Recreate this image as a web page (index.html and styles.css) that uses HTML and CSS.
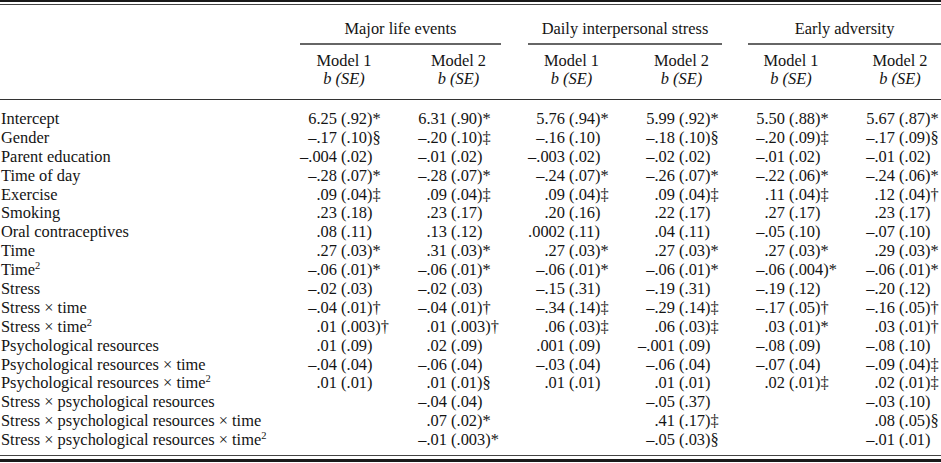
FILE: index.html
```html
<!DOCTYPE html>
<html>
<head>
<meta charset="utf-8">
<link rel="stylesheet" href="styles.css">
</head>
<body>
<div class="tbl">
  <div class="rule-top"></div>
  <div class="head">
    <div class="lab"></div>
    <div class="grp g1"><span class="gt">Major life events</span></div>
    <div class="grp g2"><span class="gt">Daily interpersonal stress</span></div>
    <div class="grp g3"><span class="gt">Early adversity</span></div>
    <div class="lab"></div>
    <div class="mh"><div class="ml">Model 1</div><div class="ml"><i>b (SE)</i></div></div>
    <div class="mh"><div class="ml">Model 2</div><div class="ml"><i>b (SE)</i></div></div>
    <div class="mh"><div class="ml">Model 1</div><div class="ml"><i>b (SE)</i></div></div>
    <div class="mh"><div class="ml">Model 2</div><div class="ml"><i>b (SE)</i></div></div>
    <div class="mh"><div class="ml">Model 1</div><div class="ml"><i>b (SE)</i></div></div>
    <div class="mh last"><div class="ml">Model 2</div><div class="ml"><i>b (SE)</i></div></div>
  </div>
  <div class="rule-mid"></div>
  <div class="body">
    <div class="lab">Intercept</div>
    <div class="c c1"><span class="b">6.25</span> (.92)*</div>
    <div class="c c2"><span class="b">6.31</span> (.90)*</div>
    <div class="c c3"><span class="b">5.76</span> (.94)*</div>
    <div class="c c4"><span class="b">5.99</span> (.92)*</div>
    <div class="c c5"><span class="b">5.50</span> (.88)*</div>
    <div class="c c6"><span class="b">5.67</span> (.87)*</div>

    <div class="lab">Gender</div>
    <div class="c c1"><span class="b">–.17</span> (.10)§</div>
    <div class="c c2"><span class="b">–.20</span> (.10)‡</div>
    <div class="c c3"><span class="b">–.16</span> (.10)</div>
    <div class="c c4"><span class="b">–.18</span> (.10)§</div>
    <div class="c c5"><span class="b">–.20</span> (.09)‡</div>
    <div class="c c6"><span class="b">–.17</span> (.09)§</div>

    <div class="lab">Parent education</div>
    <div class="c c1"><span class="b">–.004</span> (.02)</div>
    <div class="c c2"><span class="b">–.01</span> (.02)</div>
    <div class="c c3"><span class="b">–.003</span> (.02)</div>
    <div class="c c4"><span class="b">–.02</span> (.02)</div>
    <div class="c c5"><span class="b">–.01</span> (.02)</div>
    <div class="c c6"><span class="b">–.01</span> (.02)</div>

    <div class="lab">Time of day</div>
    <div class="c c1"><span class="b">–.28</span> (.07)*</div>
    <div class="c c2"><span class="b">–.28</span> (.07)*</div>
    <div class="c c3"><span class="b">–.24</span> (.07)*</div>
    <div class="c c4"><span class="b">–.26</span> (.07)*</div>
    <div class="c c5"><span class="b">–.22</span> (.06)*</div>
    <div class="c c6"><span class="b">–.24</span> (.06)*</div>

    <div class="lab">Exercise</div>
    <div class="c c1"><span class="b">.09</span> (.04)‡</div>
    <div class="c c2"><span class="b">.09</span> (.04)‡</div>
    <div class="c c3"><span class="b">.09</span> (.04)‡</div>
    <div class="c c4"><span class="b">.09</span> (.04)‡</div>
    <div class="c c5"><span class="b">.11</span> (.04)‡</div>
    <div class="c c6"><span class="b">.12</span> (.04)†</div>

    <div class="lab">Smoking</div>
    <div class="c c1"><span class="b">.23</span> (.18)</div>
    <div class="c c2"><span class="b">.23</span> (.17)</div>
    <div class="c c3"><span class="b">.20</span> (.16)</div>
    <div class="c c4"><span class="b">.22</span> (.17)</div>
    <div class="c c5"><span class="b">.27</span> (.17)</div>
    <div class="c c6"><span class="b">.23</span> (.17)</div>

    <div class="lab">Oral contraceptives</div>
    <div class="c c1"><span class="b">.08</span> (.11)</div>
    <div class="c c2"><span class="b">.13</span> (.12)</div>
    <div class="c c3"><span class="b">.0002</span> (.11)</div>
    <div class="c c4"><span class="b">.04</span> (.11)</div>
    <div class="c c5"><span class="b">–.05</span> (.10)</div>
    <div class="c c6"><span class="b">–.07</span> (.10)</div>

    <div class="lab">Time</div>
    <div class="c c1"><span class="b">.27</span> (.03)*</div>
    <div class="c c2"><span class="b">.31</span> (.03)*</div>
    <div class="c c3"><span class="b">.27</span> (.03)*</div>
    <div class="c c4"><span class="b">.27</span> (.03)*</div>
    <div class="c c5"><span class="b">.27</span> (.03)*</div>
    <div class="c c6"><span class="b">.29</span> (.03)*</div>

    <div class="lab">Time<sup>2</sup></div>
    <div class="c c1"><span class="b">–.06</span> (.01)*</div>
    <div class="c c2"><span class="b">–.06</span> (.01)*</div>
    <div class="c c3"><span class="b">–.06</span> (.01)*</div>
    <div class="c c4"><span class="b">–.06</span> (.01)*</div>
    <div class="c c5"><span class="b">–.06</span> (.004)*</div>
    <div class="c c6"><span class="b">–.06</span> (.01)*</div>

    <div class="lab">Stress</div>
    <div class="c c1"><span class="b">–.02</span> (.03)</div>
    <div class="c c2"><span class="b">–.02</span> (.03)</div>
    <div class="c c3"><span class="b">–.15</span> (.31)</div>
    <div class="c c4"><span class="b">–.19</span> (.31)</div>
    <div class="c c5"><span class="b">–.19</span> (.12)</div>
    <div class="c c6"><span class="b">–.20</span> (.12)</div>

    <div class="lab">Stress × time</div>
    <div class="c c1"><span class="b">–.04</span> (.01)†</div>
    <div class="c c2"><span class="b">–.04</span> (.01)†</div>
    <div class="c c3"><span class="b">–.34</span> (.14)‡</div>
    <div class="c c4"><span class="b">–.29</span> (.14)‡</div>
    <div class="c c5"><span class="b">–.17</span> (.05)†</div>
    <div class="c c6"><span class="b">–.16</span> (.05)†</div>

    <div class="lab">Stress × time<sup>2</sup></div>
    <div class="c c1"><span class="b">.01</span> (.003)†</div>
    <div class="c c2"><span class="b">.01</span> (.003)†</div>
    <div class="c c3"><span class="b">.06</span> (.03)‡</div>
    <div class="c c4"><span class="b">.06</span> (.03)‡</div>
    <div class="c c5"><span class="b">.03</span> (.01)*</div>
    <div class="c c6"><span class="b">.03</span> (.01)†</div>

    <div class="lab">Psychological resources</div>
    <div class="c c1"><span class="b">.01</span> (.09)</div>
    <div class="c c2"><span class="b">.02</span> (.09)</div>
    <div class="c c3"><span class="b">.001</span> (.09)</div>
    <div class="c c4"><span class="b">–.001</span> (.09)</div>
    <div class="c c5"><span class="b">–.08</span> (.09)</div>
    <div class="c c6"><span class="b">–.08</span> (.10)</div>

    <div class="lab">Psychological resources × time</div>
    <div class="c c1"><span class="b">–.04</span> (.04)</div>
    <div class="c c2"><span class="b">–.06</span> (.04)</div>
    <div class="c c3"><span class="b">–.03</span> (.04)</div>
    <div class="c c4"><span class="b">–.06</span> (.04)</div>
    <div class="c c5"><span class="b">–.07</span> (.04)</div>
    <div class="c c6"><span class="b">–.09</span> (.04)‡</div>

    <div class="lab">Psychological resources × time<sup>2</sup></div>
    <div class="c c1"><span class="b">.01</span> (.01)</div>
    <div class="c c2"><span class="b">.01</span> (.01)§</div>
    <div class="c c3"><span class="b">.01</span> (.01)</div>
    <div class="c c4"><span class="b">.01</span> (.01)</div>
    <div class="c c5"><span class="b">.02</span> (.01)‡</div>
    <div class="c c6"><span class="b">.02</span> (.01)‡</div>

    <div class="lab">Stress × psychological resources</div>
    <div class="c c1"></div>
    <div class="c c2"><span class="b">–.04</span> (.04)</div>
    <div class="c c3"></div>
    <div class="c c4"><span class="b">–.05</span> (.37)</div>
    <div class="c c5"></div>
    <div class="c c6"><span class="b">–.03</span> (.10)</div>

    <div class="lab">Stress × psychological resources × time</div>
    <div class="c c1"></div>
    <div class="c c2"><span class="b">.07</span> (.02)*</div>
    <div class="c c3"></div>
    <div class="c c4"><span class="b">.41</span> (.17)‡</div>
    <div class="c c5"></div>
    <div class="c c6"><span class="b">.08</span> (.05)§</div>

    <div class="lab">Stress × psychological resources × time<sup>2</sup></div>
    <div class="c c1"></div>
    <div class="c c2"><span class="b">–.01</span> (.003)*</div>
    <div class="c c3"></div>
    <div class="c c4"><span class="b">–.05</span> (.03)§</div>
    <div class="c c5"></div>
    <div class="c c6"><span class="b">–.01</span> (.01)</div>
  </div>
  <div class="rule-bot"></div>
</div>
</body>
</html>
```

FILE: styles.css
```css
html, body {
  margin: 0;
  padding: 0;
  background: #ffffff;
}
body {
  font-family: "Liberation Serif", "Times New Roman", serif;
  font-size: 16.4px;
  color: #141414;
  width: 941px;
  overflow: hidden;
}
.tbl {
  width: 941px;
}
.rule-top {
  height: 2px;
  border-top: 2px solid #1a1a1a;
  border-bottom: 1px solid #444;
}
.head {
  display: grid;
  grid-template-columns: 287px 114px 115px 111px 109px 110px 95px;
  padding-top: 14px;
  padding-bottom: 10.8px;
}
.grp {
  grid-column: span 2;
  line-height: 19px;
  text-align: center;
  padding-bottom: 5px;
  border-bottom: 2px solid #666;
  margin: 0 14px 0 12px;
  white-space: nowrap;
}
.grp.g1 { margin-left: 13px; margin-right: 15px; }
.grp.g3 { margin-right: 0; }
.mh {
  text-align: center;
  margin-top: 6.8px;
}
.ml {
  line-height: 18.2px;
  height: 18.2px;
  white-space: nowrap;
}
.mh i {
  font-style: italic;
}
.mh.last {
  padding-left: 13px;
}
.rule-mid {
  height: 0;
  border-top: 1px solid #333;
}
.body {
  display: grid;
  grid-template-columns: 287px 114px 115px 111px 109px 110px 95px;
  grid-auto-rows: 18.9px;
  line-height: 18.9px;
  padding-top: 10px;
  padding-bottom: 4.8px;
}
.lab {
  padding-left: 1px;
  white-space: nowrap;
}
.c {
  white-space: nowrap;
}
.b {
  display: inline-block;
  text-align: right;
}
.c1 .b { width: 50px; }
.c2 .b { width: 46px; }
.c3 .b { width: 49px; }
.c4 .b { width: 48px; }
.c5 .b { width: 49px; }
.c6 .b { width: 49px; }
sup {
  font-size: 10.5px;
  line-height: 0;
  vertical-align: 6px;
}
.rule-bot {
  height: 3px;
  border-top: 1px solid #444;
  border-bottom: 3px solid #1a1a1a;
}
```
